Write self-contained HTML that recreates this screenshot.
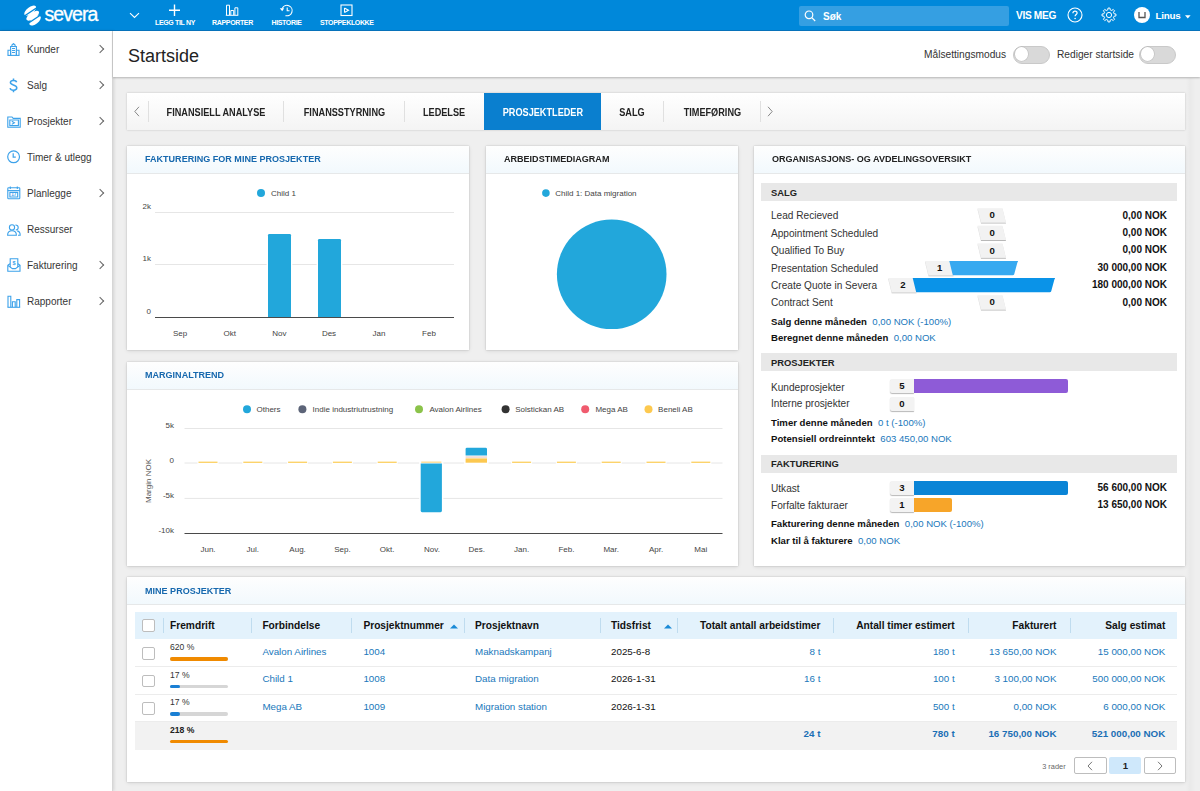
<!DOCTYPE html>
<html><head><meta charset="utf-8">
<style>
*{box-sizing:border-box;margin:0;padding:0}
html,body{width:1200px;height:791px;overflow:hidden}
body{position:relative;background:#efefef;font-family:"Liberation Sans",sans-serif;color:#333;font-size:10px}
.a{position:absolute}
#hdr{left:0;top:0;width:1200px;height:31px;background:#0088da;border-bottom:1px solid #0874bd}
#side{left:0;top:31px;width:113px;height:760px;background:#fff;border-right:1px solid #d6d6d6;box-shadow:1px 0 3px rgba(0,0,0,.12)}
#ttl{left:113px;top:31px;width:1087px;height:46px;background:#fff;box-shadow:0 1px 2px rgba(0,0,0,.25)}
.panel{background:#fff;box-shadow:0 0 1.5px rgba(0,0,0,.2),0 0.5px 4px rgba(0,0,0,.1)}
.ph{position:absolute;left:0;top:0;right:0;height:28px;background:linear-gradient(#fefefe,#f2f9fd);border-bottom:1px solid #e6e8e9}
.pt{position:absolute;left:17px;top:8px;font-weight:bold;font-size:9.6px;color:#1b6fb5;white-space:nowrap}
.hl{top:19px;font-size:7px;font-weight:bold;color:#fff;text-align:center;white-space:nowrap;letter-spacing:-0.35px}
.tg{top:14.7px;width:37px;height:18px;border-radius:9px;background:#d9d9d9;border:1.6px solid #c9c9c9}
.tg div{position:absolute;left:0.8px;top:0.6px;width:13.6px;height:13.6px;border-radius:50%;background:#fff;box-shadow:0 0 0 0.6px rgba(0,0,0,.12)}
.nav .it{position:absolute;left:0;width:112px;height:20px}
.nav .lb{position:absolute;left:27px;top:3px;font-size:10px;color:#363636}
.nav .ch{position:absolute;left:96.5px;top:5px;width:6px;height:6px;border-right:1.2px solid #666;border-top:1.2px solid #666;transform:rotate(45deg)}
.nav svg{position:absolute;left:7px;top:0}
.tab{position:absolute;top:0;height:37px;line-height:39.6px;font-weight:bold;font-size:10px;color:#222;text-align:center;white-space:nowrap}
.tab span{display:inline-block;transform:scaleX(0.915)}
.sep{position:absolute;top:8px;width:1px;height:21px;background:#e0e0e0}
.lbl{position:absolute;font-size:9.6px;color:#444;white-space:nowrap}
.val{position:absolute;font-size:9.6px;color:#111;font-weight:bold;white-space:nowrap;text-align:right}
.lnk{color:#2a7fc1;font-weight:normal}
.sec{position:absolute;left:7px;width:416px;height:18px;background:#e9e9e9}
.sec span{position:absolute;left:10px;top:4px;font-weight:bold;font-size:9.6px;color:#222}
.bdg{position:absolute;width:25px;height:14px;background:#f3f3f3;border-radius:2px;box-shadow:0 1px 1px rgba(0,0,0,.25);font-weight:bold;font-size:9.5px;color:#111;text-align:center;line-height:14px}
.bar{position:absolute;height:14px;border-radius:0 2px 2px 0}
.th{position:absolute;top:0;height:27px;line-height:27px;font-weight:bold;font-size:9.8px;color:#111;white-space:nowrap}
.ts{position:absolute;top:6px;width:1px;height:15px;background:#c5dcec}
.td{position:absolute;font-size:9.8px;color:#2a7fc1;white-space:nowrap}
.cb{position:absolute;left:7px;width:13px;height:13px;border:1px solid #b5b5b5;border-radius:2px;background:#fff}
</style></head><body>

<!-- HEADER -->
<div id="hdr" class="a">
  <svg class="a" style="left:23px;top:5px" width="19" height="21" viewBox="0 0 19 21">
    <g fill="#fff">
      <ellipse cx="7.2" cy="5.6" rx="7" ry="3.3" transform="rotate(-38 7.2 5.6)"/>
      <ellipse cx="9.7" cy="10.7" rx="7.4" ry="3.2" transform="rotate(-34 9.7 10.7)"/>
      <ellipse cx="12.1" cy="15.6" rx="6.8" ry="3.3" transform="rotate(-38 12.1 15.6)"/>
    </g>
    <g stroke="#0088da" stroke-width="1.35" fill="none">
      <path d="M1 11.2 L14.5 2.2"/>
      <path d="M4.5 18.8 L18 9.8"/>
    </g>
  </svg>
  <div class="a" style="left:44.5px;top:3.2px;font-size:19.5px;color:#fff;letter-spacing:-0.95px;-webkit-text-stroke:0.3px #fff">severa</div>
  <svg class="a" style="left:129px;top:12px" width="11" height="7" viewBox="0 0 11 7"><path d="M1 1.2 L5.5 5.5 L10 1.2" stroke="#fff" stroke-width="1.1" fill="none"/></svg>
  <svg class="a" style="left:168px;top:4px" width="13" height="13" viewBox="0 0 13 13"><path d="M6.5 0.5V12M1 6.3H12" stroke="#fff" stroke-width="1.4"/></svg>
  <div class="a hl" style="left:155px;width:40px">LEGG TIL NY</div>
  <svg class="a" style="left:225px;top:4px" width="14" height="12" viewBox="0 0 14 12"><g stroke="#fff" stroke-width="1" fill="none"><path d="M1.5 11V1.2H4.5V11"/><path d="M5.8 11V6.5H8.7V11"/><path d="M9.9 11V3.8H12.8V11"/><path d="M0.8 11.3H13.3"/></g></svg>
  <div class="a hl" style="left:212px;width:41px">RAPPORTER</div>
  <svg class="a" style="left:279px;top:4px" width="15" height="13" viewBox="0 0 15 13"><g stroke="#fff" stroke-width="1.1" fill="none"><path d="M3.2 4.5 A5.2 5.2 0 1 1 6.5 11.6"/><path d="M8.2 3.5V6.8H10.5"/></g><path d="M0.8 4.2 L5.2 4.2 L3.2 7.3Z" fill="#fff"/></svg>
  <div class="a hl" style="left:271px;width:31px">HISTORIE</div>
  <svg class="a" style="left:340px;top:4px" width="13" height="13" viewBox="0 0 13 13"><g stroke="#fff" stroke-width="1.1" fill="none"><rect x="1" y="1" width="11" height="10.5"/><path d="M4.5 4V8.5 M4.5 4 L8.5 6.2 L4.5 8.5"/></g></svg>
  <div class="a hl" style="left:320px;width:52px">STOPPEKLOKKE</div>
  <div class="a" style="left:799px;top:6px;width:210px;height:20px;background:#359fe2;border-radius:2px"></div>
  <svg class="a" style="left:804px;top:10px" width="13" height="12" viewBox="0 0 13 12"><g stroke="#fff" stroke-width="1.2" fill="none"><circle cx="5" cy="4.8" r="3.8"/><path d="M7.8 7.6 L11.2 11"/></g></svg>
  <div class="a" style="left:823px;top:11px;font-size:10px;font-weight:bold;color:#fff">Søk</div>
  <div class="a" style="left:1016px;top:10.2px;font-size:10.2px;font-weight:bold;color:#fff;letter-spacing:-0.35px">VIS MEG</div>
  <svg class="a" style="left:1067px;top:7px" width="16" height="16" viewBox="0 0 16 16"><circle cx="8" cy="8" r="7" stroke="#fff" stroke-width="1.1" fill="none"/><path d="M5.9 6.2 C5.9 4.9 6.8 4.2 8 4.2 C9.2 4.2 10.1 5 10.1 6.1 C10.1 7.5 8.1 7.6 8.1 9.3" stroke="#fff" stroke-width="1.2" fill="none"/><circle cx="8.1" cy="11.5" r="0.8" fill="#fff"/></svg>
  <svg class="a" style="left:1101px;top:7px" width="16" height="16" viewBox="0 0 16 16"><path fill="none" stroke="#fff" stroke-width="1" stroke-linejoin="round" d="M13.17 6.84 L14.93 7.01 L14.93 8.99 L13.17 9.16 L12.48 10.84 L13.60 12.20 L12.20 13.60 L10.84 12.48 L9.16 13.17 L8.99 14.93 L7.01 14.93 L6.84 13.17 L5.16 12.48 L3.80 13.60 L2.40 12.20 L3.52 10.84 L2.83 9.16 L1.07 8.99 L1.07 7.01 L2.83 6.84 L3.52 5.16 L2.40 3.80 L3.80 2.40 L5.16 3.52 L6.84 2.83 L7.01 1.07 L8.99 1.07 L9.16 2.83 L10.84 3.52 L12.20 2.40 L13.60 3.80 L12.48 5.16Z"/><circle cx="8" cy="8" r="2.6" fill="none" stroke="#fff" stroke-width="1"/></svg>
  <div class="a" style="left:1134px;top:7px;width:16px;height:16px;border-radius:50%;background:#fff"></div>
  <svg class="a" style="left:1137px;top:11px" width="10" height="8" viewBox="0 0 10 8"><path d="M2 1V6.5H8V1" stroke="#555" stroke-width="1.3" fill="none"/></svg>
  <div class="a" style="left:1155.5px;top:10.3px;font-size:9.8px;font-weight:bold;color:#fff;letter-spacing:-0.2px">Linus</div>
  <svg class="a" style="left:1184.5px;top:14.5px" width="6" height="4" viewBox="0 0 6 4"><path d="M0 0.2H5.6L2.8 3.4Z" fill="#fff"/></svg>
</div>

<!-- SIDEBAR -->
<div id="side" class="a nav">
<div class="it" style="top:10px"><svg width="13" height="13" viewBox="0 0 13 13" style="top:2px"><g stroke="#3da2ea" stroke-width="1.1" fill="none"><path d="M0.6 12.4H12.4"/><path d="M1 12.4V7.2H3.6V12.4"/><path d="M9.4 12.4V7.2H12V12.4"/><path d="M3.6 12.4V3.5H9.4V12.4"/><path d="M4.9 3.5V2L6.5 0.6L8.1 2V3.5"/><path d="M5 5.5H8M5 7.5H8M5 9.5H8"/></g></svg><div class="lb">Kunder</div><div class="ch"></div></div>
<div class="it" style="top:46px"><svg width="13" height="15" viewBox="0 0 13 15" style="top:1px"><g stroke="#3da2ea" stroke-width="1.5" fill="none"><path d="M9.6 4.2 C9.3 3 8.2 2.4 6.5 2.4 C4.5 2.4 3.4 3.3 3.4 4.6 C3.4 7.6 9.8 6.2 9.8 9.8 C9.8 11.2 8.5 12.2 6.5 12.2 C4.6 12.2 3.4 11.4 3.1 10.1"/><path d="M6.5 0.6V2.4M6.5 12.2V14.2"/></g></svg><div class="lb">Salg</div><div class="ch"></div></div>
<div class="it" style="top:82px"><svg width="14" height="12" viewBox="0 0 14 12" style="top:3px"><g stroke="#3da2ea" stroke-width="1.1" fill="none"><path d="M0.8 11.2V1H5L6.2 2.4H13.2V11.2Z"/><path d="M2.8 4H11.4V9.6H2.8Z"/><path d="M4.8 5.2L7.4 6.8L4.8 8.4"/></g></svg><div class="lb">Prosjekter</div><div class="ch"></div></div>
<div class="it" style="top:118px"><svg width="14" height="14" viewBox="0 0 14 14" style="top:1px"><g stroke="#3da2ea" stroke-width="1.2" fill="none"><circle cx="6.6" cy="6.8" r="5.9"/><path d="M6.2 3.2V7.2H8.8"/></g></svg><div class="lb">Timer &amp; utlegg</div></div>
<div class="it" style="top:154px"><svg width="14" height="14" viewBox="0 0 14 14" style="top:1px"><g stroke="#3da2ea" stroke-width="1.1" fill="none"><rect x="0.8" y="1.8" width="12" height="11" rx="0.8"/><path d="M0.8 4.6H12.8"/><path d="M3.3 0.4V3M10.3 0.4V3"/><path d="M2.9 6.4H10.7V11H2.9Z"/></g><text x="6.8" y="10.4" font-size="4.8" font-weight="bold" fill="#3da2ea" text-anchor="middle" font-family="Liberation Sans">17</text></svg><div class="lb">Planlegge</div><div class="ch"></div></div>
<div class="it" style="top:190px"><svg width="14" height="12" viewBox="0 0 14 12" style="top:3px"><g stroke="#3da2ea" stroke-width="1.1" fill="none"><circle cx="5" cy="3.4" r="2.6"/><path d="M0.6 11.2C0.6 8.2 2.3 6.8 5 6.8C7.7 6.8 9.4 8.2 9.4 11.2Z"/><path d="M8.4 1C10.2 1 11.2 2.1 11.2 3.4C11.2 4.8 10.2 5.8 8.8 6"/><path d="M10.2 6.9C12 7.3 13.2 8.6 13.2 11.2H11"/></g></svg><div class="lb">Ressurser</div></div>
<div class="it" style="top:226px"><svg width="14" height="14" viewBox="0 0 14 14" style="top:1px"><g stroke="#3da2ea" stroke-width="1.1" fill="none"><path d="M0.8 7.2V13.2H13V7.2L11 5.8"/><path d="M3 5.8L0.8 7.2"/><path d="M3.2 9V0.8H10.8V9"/><path d="M0.8 7.4L5.4 10.6H8.4L13 7.4"/></g><text x="7" y="6.6" font-size="5.5" font-weight="bold" fill="#3da2ea" text-anchor="middle" font-family="Liberation Sans">$</text></svg><div class="lb">Fakturering</div><div class="ch"></div></div>
<div class="it" style="top:262px"><svg width="14" height="13" viewBox="0 0 14 13" style="top:2px"><g stroke="#3da2ea" stroke-width="1.1" fill="none"><path d="M1 12V1.2H3.8V12"/><path d="M5.4 12V6.8H8.2V12"/><path d="M9.8 12V4.6H12.6V12"/><path d="M0.4 12.3H13.2"/></g></svg><div class="lb">Rapporter</div><div class="ch"></div></div>
</div>

<!-- TITLE BAR -->
<div id="ttl" class="a">
  <div class="a" style="left:15px;top:14.7px;font-size:18px;color:#222">Startside</div>
  <div class="a" style="left:811px;top:18.3px;font-size:10.2px;color:#333">Målsettingsmodus</div>
  <div class="a tg" style="left:899.8px"><div></div></div>
  <div class="a" style="left:944px;top:18.3px;font-size:10.2px;color:#333">Rediger startside</div>
  <div class="a tg" style="left:1026px"><div></div></div>
</div>

<!-- TABS -->
<div class="a" style="left:127px;top:93px;width:1058px;height:37px;background:linear-gradient(#fff,#f4f4f4);box-shadow:0 0 2px rgba(0,0,0,.2)">
  <svg class="a" style="left:6px;top:13px" width="8" height="11" viewBox="0 0 8 11"><path d="M6 0.8L1.8 5.5L6 10.2" stroke="#888" stroke-width="1" fill="none"/></svg>
  <div class="sep" style="left:21px"></div>
  <div class="tab" style="left:22px;width:134px"><span>FINANSIELL ANALYSE</span></div>
  <div class="sep" style="left:156px"></div>
  <div class="tab" style="left:157px;width:120px"><span>FINANSSTYRNING</span></div>
  <div class="sep" style="left:277px"></div>
  <div class="tab" style="left:278px;width:79px"><span>LEDELSE</span></div>
  <div class="tab" style="left:357px;width:117px;background:#0a7fcf;color:#fff"><span>PROSJEKTLEDER</span></div>
  <div class="tab" style="left:474px;width:62px"><span>SALG</span></div>
  <div class="sep" style="left:536px"></div>
  <div class="tab" style="left:537px;width:96px"><span>TIMEFØRING</span></div>
  <div class="sep" style="left:633px"></div>
  <svg class="a" style="left:639px;top:13px" width="8" height="11" viewBox="0 0 8 11"><path d="M2 0.8L6.2 5.5L2 10.2" stroke="#888" stroke-width="1" fill="none"/></svg>
</div>


<!--PANELS-->
<div class="a panel" style="left:127px;top:146px;width:342px;height:204px"><div class="ph"></div><div class="a" style="left:17.8px;top:7.3px;font-size:9.9px;color:#1668ae;font-weight:bold;white-space:nowrap;line-height:normal;transform:scaleX(0.915);transform-origin:0 0;">FAKTURERING FOR MINE PROSJEKTER</div><svg class="a" style="left:0;top:0" width="343" height="204"><circle cx="134" cy="47" r="4" fill="#22a7db"/><line x1="28" y1="66.5" x2="327" y2="66.5" stroke="#e6e6e6" stroke-width="1"/><line x1="28" y1="118.5" x2="327" y2="118.5" stroke="#e6e6e6" stroke-width="1"/><rect x="139.6" y="86.6" width="25.8" height="84.4" fill="#fff"/><rect x="189.6" y="91.6" width="25.8" height="79.4" fill="#fff"/><path d="M141 171V89.2Q141 88 142.2 88H162.8Q164 88 164 89.2V171Z" fill="#22a7db"/><path d="M191 171V94.2Q191 93 192.2 93H212.8Q214 93 214 94.2V171Z" fill="#22a7db"/><line x1="28" y1="171.5" x2="327" y2="171.5" stroke="#4a4a4a" stroke-width="1"/></svg><div class="a" style="left:144.0px;top:42.8px;font-size:8px;color:#444;white-space:nowrap;line-height:normal;">Child 1</div><div class="a" style="left:0;width:24px;text-align:right;top:55.6px;font-size:8px;color:#444;line-height:10px">2k</div><div class="a" style="left:0;width:24px;text-align:right;top:108.2px;font-size:8px;color:#444;line-height:10px">1k</div><div class="a" style="left:0;width:24px;text-align:right;top:160.6px;font-size:8px;color:#444;line-height:10px">0</div><div class="a" style="left:33px;width:40px;text-align:center;top:183px;font-size:8px;color:#444;line-height:10px">Sep</div><div class="a" style="left:82.8px;width:40px;text-align:center;top:183px;font-size:8px;color:#444;line-height:10px">Okt</div><div class="a" style="left:132.3px;width:40px;text-align:center;top:183px;font-size:8px;color:#444;line-height:10px">Nov</div><div class="a" style="left:182px;width:40px;text-align:center;top:183px;font-size:8px;color:#444;line-height:10px">Des</div><div class="a" style="left:232px;width:40px;text-align:center;top:183px;font-size:8px;color:#444;line-height:10px">Jan</div><div class="a" style="left:282px;width:40px;text-align:center;top:183px;font-size:8px;color:#444;line-height:10px">Feb</div></div>
<div class="a panel" style="left:486px;top:146px;width:251.5px;height:204px"><div class="ph"></div><div class="a" style="left:17.8px;top:7.3px;font-size:9.9px;color:#222;font-weight:bold;white-space:nowrap;line-height:normal;transform:scaleX(0.915);transform-origin:0 0;">ARBEIDSTIMEDIAGRAM</div><svg class="a" style="left:0;top:0" width="253" height="204"><circle cx="59.9" cy="47.1" r="3.8" fill="#22a7db"/><circle cx="125.7" cy="128.3" r="54.8" fill="#22a7db"/></svg><div class="a" style="left:69.2px;top:43.0px;font-size:8px;color:#444;white-space:nowrap;line-height:normal;">Child 1: Data migration</div></div>
<div class="a panel" style="left:754px;top:146px;width:431px;height:420px"><div class="ph"></div><div class="a" style="left:17.8px;top:7.3px;font-size:9.9px;color:#222;font-weight:bold;white-space:nowrap;line-height:normal;transform:scaleX(0.915);transform-origin:0 0;">ORGANISASJONS- OG AVDELINGSOVERSIKT</div><div class="a" style="left:7px;top:37px;width:416px;height:18px;background:#e8e8e8"></div><div class="a" style="left:17.0px;top:40.7px;font-size:9.4px;color:#222;font-weight:bold;white-space:nowrap;line-height:normal;">SALG</div><div class="a" style="left:17.0px;top:64.3px;font-size:10.1px;color:#333;white-space:nowrap;line-height:normal;">Lead Recieved</div><div class="a" style="right:18.0px;top:63.6px;font-size:10px;color:#111;font-weight:bold;white-space:nowrap;line-height:normal;">0,00 NOK</div><div class="a" style="left:17.0px;top:81.7px;font-size:10.1px;color:#333;white-space:nowrap;line-height:normal;">Appointment Scheduled</div><div class="a" style="right:18.0px;top:81.0px;font-size:10px;color:#111;font-weight:bold;white-space:nowrap;line-height:normal;">0,00 NOK</div><div class="a" style="left:17.0px;top:99.1px;font-size:10.1px;color:#333;white-space:nowrap;line-height:normal;">Qualified To Buy</div><div class="a" style="right:18.0px;top:98.4px;font-size:10px;color:#111;font-weight:bold;white-space:nowrap;line-height:normal;">0,00 NOK</div><div class="a" style="left:17.0px;top:116.5px;font-size:10.1px;color:#333;white-space:nowrap;line-height:normal;">Presentation Scheduled</div><div class="a" style="right:18.0px;top:115.8px;font-size:10px;color:#111;font-weight:bold;white-space:nowrap;line-height:normal;">30 000,00 NOK</div><div class="a" style="left:17.0px;top:133.9px;font-size:10.1px;color:#333;white-space:nowrap;line-height:normal;">Create Quote in Severa</div><div class="a" style="right:18.0px;top:133.1px;font-size:10px;color:#111;font-weight:bold;white-space:nowrap;line-height:normal;">180 000,00 NOK</div><div class="a" style="left:17.0px;top:151.3px;font-size:10.1px;color:#333;white-space:nowrap;line-height:normal;">Contract Sent</div><div class="a" style="right:18.0px;top:150.5px;font-size:10px;color:#111;font-weight:bold;white-space:nowrap;line-height:normal;">0,00 NOK</div><svg class="a" style="left:0;top:0" width="431" height="420"><defs><filter id="sh" x="-20%" y="-20%" width="140%" height="160%"><feDropShadow dx="0" dy="0.8" stdDeviation="0.5" flood-color="#000" flood-opacity="0.35"/></filter></defs><path d="M223.5 62.2 L248.5 62.2 L252.0 76.5 L227.0 76.5 Z" fill="#f2f2f2" filter="url(#sh)"/><path d="M223.5 79.8 L248.5 79.8 L252.0 94.1 L227.0 94.1 Z" fill="#f2f2f2" filter="url(#sh)"/><path d="M223.5 97.5 L248.5 97.5 L252.0 111.8 L227.0 111.8 Z" fill="#f2f2f2" filter="url(#sh)"/><path d="M223.5 149.2 L248.5 149.2 L252.0 163.5 L227.0 163.5 Z" fill="#f2f2f2" filter="url(#sh)"/><path d="M171 115 L196 115 L199.5 129.3 L174.5 129.3 Z" fill="#f2f2f2" filter="url(#sh)"/><path d="M195.3 115 L263.7 115 Q264.5 115 263.4 116.5 L260.2 128.3 Q259.8 129.3 258.7 129.3 L198.8 129.3 Z" fill="#36a9f0"/><path d="M134.2 132 L159 132 L162.5 146.3 L137.7 146.3 Z" fill="#f2f2f2" filter="url(#sh)"/><path d="M158.7 132 L300.7 132 Q301.5 132 300.4 133.5 L297.2 145.3 Q296.8 146.3 295.7 146.3 L162.2 146.3 Z" fill="#0a93e8"/></svg><div class="a" style="left:228.2px;width:20px;text-align:center;top:62.2px;height:14px;line-height:14px;font-size:9.6px;font-weight:bold;color:#111">0</div><div class="a" style="left:228.2px;width:20px;text-align:center;top:79.8px;height:14px;line-height:14px;font-size:9.6px;font-weight:bold;color:#111">0</div><div class="a" style="left:228.2px;width:20px;text-align:center;top:97.5px;height:14px;line-height:14px;font-size:9.6px;font-weight:bold;color:#111">0</div><div class="a" style="left:228.2px;width:20px;text-align:center;top:149.2px;height:14px;line-height:14px;font-size:9.6px;font-weight:bold;color:#111">0</div><div class="a" style="left:175.7px;width:20px;text-align:center;top:115.0px;height:14px;line-height:14px;font-size:9.6px;font-weight:bold;color:#111">1</div><div class="a" style="left:138.8px;width:20px;text-align:center;top:132.0px;height:14px;line-height:14px;font-size:9.6px;font-weight:bold;color:#111">2</div><div class="a" style="left:0;top:-1px;width:431px;height:420px"><div class="a" style="left:17.0px;top:170.9px;font-size:9.6px;color:#111;font-weight:bold;white-space:nowrap;line-height:normal;">Salg denne måneden&nbsp; <span style="font-weight:normal;color:#2078bb">0,00 NOK (-100%)</span></div><div class="a" style="left:17.0px;top:186.7px;font-size:9.6px;color:#111;font-weight:bold;white-space:nowrap;line-height:normal;">Beregnet denne måneden&nbsp; <span style="font-weight:normal;color:#2078bb">0,00 NOK</span></div><div class="a" style="left:7px;top:208px;width:416px;height:18px;background:#e8e8e8"></div><div class="a" style="left:17.0px;top:211.7px;font-size:9.4px;color:#222;font-weight:bold;white-space:nowrap;line-height:normal;">PROSJEKTER</div><div class="a" style="left:17.0px;top:236.7px;font-size:10.1px;color:#333;white-space:nowrap;line-height:normal;">Kundeprosjekter</div><div class="a" style="left:135.5px;top:234.4px;width:24.7px;height:14px;background:#f3f3f3;border-radius:2px 0 0 2px;box-shadow:0 1px 1px rgba(0,0,0,.28);text-align:center;line-height:14px;font-size:9.6px;font-weight:bold;color:#111">5</div><div class="a" style="left:160.2px;top:234.4px;width:153.8px;height:14px;background:#8e5bd7;border-radius:0 2px 2px 0"></div><div class="a" style="left:17.0px;top:253.2px;font-size:10.1px;color:#333;white-space:nowrap;line-height:normal;">Interne prosjekter</div><div class="a" style="left:135.5px;top:252px;width:24.7px;height:14px;background:#f3f3f3;border-radius:2px 0 0 2px;box-shadow:0 1px 1px rgba(0,0,0,.28);text-align:center;line-height:14px;font-size:9.6px;font-weight:bold;color:#111">0</div><div class="a" style="left:17.0px;top:272.2px;font-size:9.6px;color:#111;font-weight:bold;white-space:nowrap;line-height:normal;">Timer denne måneden&nbsp; <span style="font-weight:normal;color:#2078bb">0 t (-100%)</span></div><div class="a" style="left:17.0px;top:288.3px;font-size:9.6px;color:#111;font-weight:bold;white-space:nowrap;line-height:normal;">Potensiell ordreinntekt&nbsp; <span style="font-weight:normal;color:#2078bb">603 450,00 NOK</span></div><div class="a" style="left:7px;top:309.7px;width:416px;height:18px;background:#e8e8e8"></div><div class="a" style="left:17.0px;top:313.4px;font-size:9.4px;color:#222;font-weight:bold;white-space:nowrap;line-height:normal;">FAKTURERING</div><div class="a" style="left:17.0px;top:337.9px;font-size:10.1px;color:#333;white-space:nowrap;line-height:normal;">Utkast</div><div class="a" style="left:135.5px;top:336.2px;width:24.7px;height:14px;background:#f3f3f3;border-radius:2px 0 0 2px;box-shadow:0 1px 1px rgba(0,0,0,.28);text-align:center;line-height:14px;font-size:9.6px;font-weight:bold;color:#111">3</div><div class="a" style="left:160.2px;top:336.2px;width:153.8px;height:14px;background:#0a84d6;border-radius:0 2px 2px 0"></div><div class="a" style="right:18.0px;top:336.6px;font-size:10px;color:#111;font-weight:bold;white-space:nowrap;line-height:normal;">56 600,00 NOK</div><div class="a" style="left:17.0px;top:354.8px;font-size:10.1px;color:#333;white-space:nowrap;line-height:normal;">Forfalte fakturaer</div><div class="a" style="left:135.5px;top:353.2px;width:24.7px;height:14px;background:#f3f3f3;border-radius:2px 0 0 2px;box-shadow:0 1px 1px rgba(0,0,0,.28);text-align:center;line-height:14px;font-size:9.6px;font-weight:bold;color:#111">1</div><div class="a" style="left:160.2px;top:353.2px;width:37.5px;height:14px;background:#f7a529;border-radius:0 2px 2px 0"></div><div class="a" style="right:18.0px;top:353.6px;font-size:10px;color:#111;font-weight:bold;white-space:nowrap;line-height:normal;">13 650,00 NOK</div><div class="a" style="left:17.0px;top:373.3px;font-size:9.6px;color:#111;font-weight:bold;white-space:nowrap;line-height:normal;">Fakturering denne måneden&nbsp; <span style="font-weight:normal;color:#2078bb">0,00 NOK (-100%)</span></div><div class="a" style="left:17.0px;top:390.3px;font-size:9.6px;color:#111;font-weight:bold;white-space:nowrap;line-height:normal;">Klar til å fakturere&nbsp; <span style="font-weight:normal;color:#2078bb">0,00 NOK</span></div></div></div>
<div class="a panel" style="left:127px;top:362px;width:611px;height:204px"><div class="ph"></div><div class="a" style="left:17.8px;top:7.3px;font-size:9.9px;color:#1668ae;font-weight:bold;white-space:nowrap;line-height:normal;transform:scaleX(0.915);transform-origin:0 0;">MARGINALTREND</div><div class="a" style="left:0;top:-1px;width:611px;height:204px"><svg class="a" style="left:0;top:0" width="611" height="205"><line x1="57.5" y1="67.5" x2="595.5" y2="67.5" stroke="#e6e6e6" stroke-width="1"/><line x1="57.5" y1="102" x2="595.5" y2="102" stroke="#e6e6e6" stroke-width="1"/><line x1="57.5" y1="137.4" x2="595.5" y2="137.4" stroke="#e6e6e6" stroke-width="1"/><line x1="57.5" y1="172.5" x2="595.5" y2="172.5" stroke="#4a4a4a" stroke-width="1"/><rect x="70.5" y="99.8" width="21" height="3.3" fill="#fff"/><rect x="71.5" y="100.6" width="19" height="1.4" fill="#fcd36b"/><rect x="115.3" y="99.8" width="21" height="3.3" fill="#fff"/><rect x="116.3" y="100.6" width="19" height="1.4" fill="#fcd36b"/><rect x="160.1" y="99.8" width="21" height="3.3" fill="#fff"/><rect x="161.1" y="100.6" width="19" height="1.4" fill="#fcd36b"/><rect x="204.9" y="99.8" width="21" height="3.3" fill="#fff"/><rect x="205.9" y="100.6" width="19" height="1.4" fill="#fcd36b"/><rect x="249.7" y="99.8" width="21" height="3.3" fill="#fff"/><rect x="250.7" y="100.6" width="19" height="1.4" fill="#fcd36b"/><rect x="292.2" y="99.6" width="24.19999999999999" height="53" fill="#fff"/><rect x="294.2" y="100.6" width="20.19999999999999" height="1.1" fill="#fdd57a"/><path d="M293.7 102.6 H314.9 V149.8 Q314.9 151.2 313.5 151.2 H295.09999999999997 Q293.7 151.2 293.7 149.8 Z" fill="#22a7db"/><rect x="337.1" y="85.5" width="24.399999999999977" height="17.5" fill="#fff"/><rect x="338.6" y="97.4" width="21.399999999999977" height="4.3" fill="#fcc850"/><rect x="338.6" y="95.4" width="21.399999999999977" height="1.3" fill="#e9cfc9"/><path d="M338.6 94.4 V88.1 Q338.6 86.7 340.0 86.7 H358.6 Q360 86.7 360 88.1 V94.4 Z" fill="#22a7db"/><rect x="384.1" y="99.8" width="21" height="3.3" fill="#fff"/><rect x="385.1" y="100.6" width="19" height="1.4" fill="#fcd36b"/><rect x="428.9" y="99.8" width="21" height="3.3" fill="#fff"/><rect x="429.9" y="100.6" width="19" height="1.4" fill="#fcd36b"/><rect x="473.7" y="99.8" width="21" height="3.3" fill="#fff"/><rect x="474.7" y="100.6" width="19" height="1.4" fill="#fcd36b"/><rect x="518.5" y="99.8" width="21" height="3.3" fill="#fff"/><rect x="519.5" y="100.6" width="19" height="1.4" fill="#fcd36b"/><rect x="563.3" y="99.8" width="21" height="3.3" fill="#fff"/><rect x="564.3" y="100.6" width="19" height="1.4" fill="#fcd36b"/><circle cx="120" cy="48.3" r="4" fill="#22a7db"/><circle cx="175.4" cy="48.3" r="4" fill="#5c6478"/><circle cx="292" cy="48.3" r="4" fill="#8bc34a"/><circle cx="378.6" cy="48.3" r="4" fill="#333"/><circle cx="458.2" cy="48.3" r="4" fill="#f05b6e"/><circle cx="521.5" cy="48.3" r="4" fill="#fdc94f"/></svg><div class="a" style="left:129.5px;top:44.0px;font-size:8px;color:#444;white-space:nowrap;line-height:normal;">Others</div><div class="a" style="left:185.6px;top:44.0px;font-size:8px;color:#444;white-space:nowrap;line-height:normal;">Indie industriutrustning</div><div class="a" style="left:302.4px;top:44.0px;font-size:8px;color:#444;white-space:nowrap;line-height:normal;">Avalon Airlines</div><div class="a" style="left:388.2px;top:44.0px;font-size:8px;color:#444;white-space:nowrap;line-height:normal;">Solstickan AB</div><div class="a" style="left:468.4px;top:44.0px;font-size:8px;color:#444;white-space:nowrap;line-height:normal;">Mega AB</div><div class="a" style="left:531.1px;top:44.0px;font-size:8px;color:#444;white-space:nowrap;line-height:normal;">Beneli AB</div><div class="a" style="left:0;width:47px;text-align:right;top:60.4px;font-size:8px;color:#444;line-height:10px">5k</div><div class="a" style="left:0;width:47px;text-align:right;top:95.0px;font-size:8px;color:#444;line-height:10px">0</div><div class="a" style="left:0;width:47px;text-align:right;top:130.0px;font-size:8px;color:#444;line-height:10px">-5k</div><div class="a" style="left:0;width:47px;text-align:right;top:165.4px;font-size:8px;color:#444;line-height:10px">-10k</div><div class="a" style="left:-8px;top:115px;width:60px;text-align:center;font-size:8px;color:#555;line-height:10px;transform:rotate(-90deg)">Margin NOK</div><div class="a" style="left:61.0px;width:40px;text-align:center;top:184px;font-size:8px;color:#444;line-height:10px">Jun.</div><div class="a" style="left:105.8px;width:40px;text-align:center;top:184px;font-size:8px;color:#444;line-height:10px">Jul.</div><div class="a" style="left:150.6px;width:40px;text-align:center;top:184px;font-size:8px;color:#444;line-height:10px">Aug.</div><div class="a" style="left:195.4px;width:40px;text-align:center;top:184px;font-size:8px;color:#444;line-height:10px">Sep.</div><div class="a" style="left:240.2px;width:40px;text-align:center;top:184px;font-size:8px;color:#444;line-height:10px">Okt.</div><div class="a" style="left:285.0px;width:40px;text-align:center;top:184px;font-size:8px;color:#444;line-height:10px">Nov.</div><div class="a" style="left:329.8px;width:40px;text-align:center;top:184px;font-size:8px;color:#444;line-height:10px">Des.</div><div class="a" style="left:374.6px;width:40px;text-align:center;top:184px;font-size:8px;color:#444;line-height:10px">Jan.</div><div class="a" style="left:419.4px;width:40px;text-align:center;top:184px;font-size:8px;color:#444;line-height:10px">Feb.</div><div class="a" style="left:464.2px;width:40px;text-align:center;top:184px;font-size:8px;color:#444;line-height:10px">Mar.</div><div class="a" style="left:509.0px;width:40px;text-align:center;top:184px;font-size:8px;color:#444;line-height:10px">Apr.</div><div class="a" style="left:553.8px;width:40px;text-align:center;top:184px;font-size:8px;color:#444;line-height:10px">Mai</div></div></div>
<div class="a panel" style="left:127px;top:577px;width:1058px;height:205px"><div class="ph"></div><div class="a" style="left:17.8px;top:8.3px;font-size:9.9px;color:#1668ae;font-weight:bold;white-space:nowrap;line-height:normal;transform:scaleX(0.915);transform-origin:0 0;">MINE PROSJEKTER</div><div class="a" style="left:8px;top:35px;width:1042px;height:27px;background:#e3f2fc"></div><div class="a" style="left:8px;top:89.0px;width:1042px;height:1px;background:#ececec"></div><div class="a" style="left:8px;top:116.5px;width:1042px;height:1px;background:#ececec"></div><div class="a" style="left:8px;top:144.0px;width:1042px;height:1px;background:#ececec"></div><div class="a" style="left:8px;top:144.5px;width:1042px;height:28px;background:#f2f2f2"></div><div class="a" style="left:15.4px;top:42.4px;width:12.6px;height:12.6px;border:1px solid #bdbdbd;border-radius:2px;background:#fff"></div><div class="a" style="left:36.4px;top:41px;width:1px;height:15px;background:#bfdcef"></div><div class="a" style="left:124.0px;top:41px;width:1px;height:15px;background:#bfdcef"></div><div class="a" style="left:224.4px;top:41px;width:1px;height:15px;background:#bfdcef"></div><div class="a" style="left:336.6px;top:41px;width:1px;height:15px;background:#bfdcef"></div><div class="a" style="left:472.8px;top:41px;width:1px;height:15px;background:#bfdcef"></div><div class="a" style="left:549.6px;top:41px;width:1px;height:15px;background:#bfdcef"></div><div class="a" style="left:706.4px;top:41px;width:1px;height:15px;background:#bfdcef"></div><div class="a" style="left:840.7px;top:41px;width:1px;height:15px;background:#bfdcef"></div><div class="a" style="left:942.5px;top:41px;width:1px;height:15px;background:#bfdcef"></div><div class="a" style="left:43.0px;top:43.4px;font-size:10.2px;color:#111;font-weight:bold;white-space:nowrap;line-height:normal;">Fremdrift</div><div class="a" style="left:135.4px;top:43.4px;font-size:10.2px;color:#111;font-weight:bold;white-space:nowrap;line-height:normal;">Forbindelse</div><div class="a" style="left:236.4px;top:43.4px;font-size:10.2px;color:#111;font-weight:bold;white-space:nowrap;line-height:normal;">Prosjektnummer</div><div class="a" style="left:348.0px;top:43.4px;font-size:10.2px;color:#111;font-weight:bold;white-space:nowrap;line-height:normal;">Prosjektnavn</div><div class="a" style="left:484.0px;top:43.4px;font-size:10.2px;color:#111;font-weight:bold;white-space:nowrap;line-height:normal;">Tidsfrist</div><div class="a" style="right:364.6px;top:43.4px;font-size:10.2px;color:#111;font-weight:bold;white-space:nowrap;line-height:normal;">Totalt antall arbeidstimer</div><div class="a" style="right:230.3px;top:43.4px;font-size:10.2px;color:#111;font-weight:bold;white-space:nowrap;line-height:normal;">Antall timer estimert</div><div class="a" style="right:128.5px;top:43.4px;font-size:10.2px;color:#111;font-weight:bold;white-space:nowrap;line-height:normal;">Fakturert</div><div class="a" style="right:19.7px;top:43.4px;font-size:10.2px;color:#111;font-weight:bold;white-space:nowrap;line-height:normal;">Salg estimat</div><svg class="a" style="left:323.4px;top:46.5px" width="8" height="5" viewBox="0 0 8 5"><path d="M0 4.5L4 0.5L8 4.5Z" fill="#1a8ad6"/></svg><svg class="a" style="left:537.0px;top:46.5px" width="8" height="5" viewBox="0 0 8 5"><path d="M0 4.5L4 0.5L8 4.5Z" fill="#1a8ad6"/></svg><div class="a" style="left:15.4px;top:70.0px;width:12.6px;height:12.6px;border:1px solid #bdbdbd;border-radius:2px;background:#fff"></div><div class="a" style="left:43.0px;top:65.2px;font-size:8.6px;color:#333;white-space:nowrap;line-height:normal;">620 %</div><div class="a" style="left:43px;top:80.4px;width:58px;height:3.4px;border-radius:2px;background:#d6d6d6"></div><div class="a" style="left:43px;top:80.4px;width:58.0px;height:3.4px;border-radius:2px;background:#f08a00"></div><div class="a" style="left:135.4px;top:68.7px;font-size:9.8px;color:#2078bb;white-space:nowrap;line-height:normal;">Avalon Airlines</div><div class="a" style="left:236.4px;top:68.7px;font-size:9.8px;color:#2078bb;white-space:nowrap;line-height:normal;">1004</div><div class="a" style="left:348.0px;top:68.7px;font-size:9.8px;color:#2078bb;white-space:nowrap;line-height:normal;">Maknadskampanj</div><div class="a" style="left:484.0px;top:68.7px;font-size:9.8px;color:#111;white-space:nowrap;line-height:normal;">2025-6-8</div><div class="a" style="right:364.6px;top:68.7px;font-size:9.8px;color:#2078bb;white-space:nowrap;line-height:normal;">8 t</div><div class="a" style="right:230.3px;top:68.7px;font-size:9.8px;color:#2078bb;white-space:nowrap;line-height:normal;">180 t</div><div class="a" style="right:128.5px;top:68.7px;font-size:9.8px;color:#2078bb;white-space:nowrap;line-height:normal;">13 650,00 NOK</div><div class="a" style="right:19.7px;top:68.7px;font-size:9.8px;color:#2078bb;white-space:nowrap;line-height:normal;">15 000,00 NOK</div><div class="a" style="left:15.4px;top:97.5px;width:12.6px;height:12.6px;border:1px solid #bdbdbd;border-radius:2px;background:#fff"></div><div class="a" style="left:43.0px;top:92.7px;font-size:8.6px;color:#333;white-space:nowrap;line-height:normal;">17 %</div><div class="a" style="left:43px;top:107.9px;width:58px;height:3.4px;border-radius:2px;background:#d6d6d6"></div><div class="a" style="left:43px;top:107.9px;width:10.0px;height:3.4px;border-radius:2px;background:#1a7fd4"></div><div class="a" style="left:135.4px;top:96.2px;font-size:9.8px;color:#2078bb;white-space:nowrap;line-height:normal;">Child 1</div><div class="a" style="left:236.4px;top:96.2px;font-size:9.8px;color:#2078bb;white-space:nowrap;line-height:normal;">1008</div><div class="a" style="left:348.0px;top:96.2px;font-size:9.8px;color:#2078bb;white-space:nowrap;line-height:normal;">Data migration</div><div class="a" style="left:484.0px;top:96.2px;font-size:9.8px;color:#111;white-space:nowrap;line-height:normal;">2026-1-31</div><div class="a" style="right:364.6px;top:96.2px;font-size:9.8px;color:#2078bb;white-space:nowrap;line-height:normal;">16 t</div><div class="a" style="right:230.3px;top:96.2px;font-size:9.8px;color:#2078bb;white-space:nowrap;line-height:normal;">100 t</div><div class="a" style="right:128.5px;top:96.2px;font-size:9.8px;color:#2078bb;white-space:nowrap;line-height:normal;">3 100,00 NOK</div><div class="a" style="right:19.7px;top:96.2px;font-size:9.8px;color:#2078bb;white-space:nowrap;line-height:normal;">500 000,00 NOK</div><div class="a" style="left:15.4px;top:125.0px;width:12.6px;height:12.6px;border:1px solid #bdbdbd;border-radius:2px;background:#fff"></div><div class="a" style="left:43.0px;top:120.2px;font-size:8.6px;color:#333;white-space:nowrap;line-height:normal;">17 %</div><div class="a" style="left:43px;top:135.4px;width:58px;height:3.4px;border-radius:2px;background:#d6d6d6"></div><div class="a" style="left:43px;top:135.4px;width:10.0px;height:3.4px;border-radius:2px;background:#1a7fd4"></div><div class="a" style="left:135.4px;top:123.7px;font-size:9.8px;color:#2078bb;white-space:nowrap;line-height:normal;">Mega AB</div><div class="a" style="left:236.4px;top:123.7px;font-size:9.8px;color:#2078bb;white-space:nowrap;line-height:normal;">1009</div><div class="a" style="left:348.0px;top:123.7px;font-size:9.8px;color:#2078bb;white-space:nowrap;line-height:normal;">Migration station</div><div class="a" style="left:484.0px;top:123.7px;font-size:9.8px;color:#111;white-space:nowrap;line-height:normal;">2026-1-31</div><div class="a" style="right:230.3px;top:123.7px;font-size:9.8px;color:#2078bb;white-space:nowrap;line-height:normal;">500 t</div><div class="a" style="right:128.5px;top:123.7px;font-size:9.8px;color:#2078bb;white-space:nowrap;line-height:normal;">0,00 NOK</div><div class="a" style="right:19.7px;top:123.7px;font-size:9.8px;color:#2078bb;white-space:nowrap;line-height:normal;">6 000,00 NOK</div><div class="a" style="left:43.0px;top:147.7px;font-size:8.6px;color:#222;font-weight:bold;white-space:nowrap;line-height:normal;">218 %</div><div class="a" style="left:43px;top:162.9px;width:58px;height:3.4px;border-radius:2px;background:#f08a00"></div><div class="a" style="right:364.6px;top:151.2px;font-size:9.8px;color:#1b6fb5;font-weight:bold;white-space:nowrap;line-height:normal;">24 t</div><div class="a" style="right:230.3px;top:151.2px;font-size:9.8px;color:#1b6fb5;font-weight:bold;white-space:nowrap;line-height:normal;">780 t</div><div class="a" style="right:128.5px;top:151.2px;font-size:9.8px;color:#1b6fb5;font-weight:bold;white-space:nowrap;line-height:normal;">16 750,00 NOK</div><div class="a" style="right:19.7px;top:151.2px;font-size:9.8px;color:#1b6fb5;font-weight:bold;white-space:nowrap;line-height:normal;">521 000,00 NOK</div><div class="a" style="left:915.2px;top:184.8px;font-size:7.4px;color:#666;white-space:nowrap;line-height:normal;">3 rader</div><div class="a" style="left:947.3px;top:180.2px;width:33.1px;height:17.3px;border:1px solid #bdbdbd;border-radius:2px;background:#fff"></div><svg class="a" style="left:959px;top:184px" width="8" height="10" viewBox="0 0 8 10"><path d="M6 0.8L2 5L6 9.2" stroke="#777" stroke-width="1" fill="none"/></svg><div class="a" style="left:982.2px;top:180.2px;width:32.3px;height:17.3px;border-radius:2px;background:#cfe8fb;text-align:center;line-height:17px;font-size:9.6px;font-weight:bold;color:#222">1</div><div class="a" style="left:1016.7px;top:180.2px;width:32.6px;height:17.3px;border:1px solid #bdbdbd;border-radius:2px;background:#fff"></div><svg class="a" style="left:1029px;top:184px" width="8" height="10" viewBox="0 0 8 10"><path d="M2 0.8L6 5L2 9.2" stroke="#777" stroke-width="1" fill="none"/></svg></div>
<!--/PANELS-->
<div class="a" style="left:1186px;top:78px;width:10px;height:713px;background:linear-gradient(to right,rgba(0,0,0,0),rgba(0,0,0,.025) 40%,rgba(0,0,0,0))"></div>
</body></html>
